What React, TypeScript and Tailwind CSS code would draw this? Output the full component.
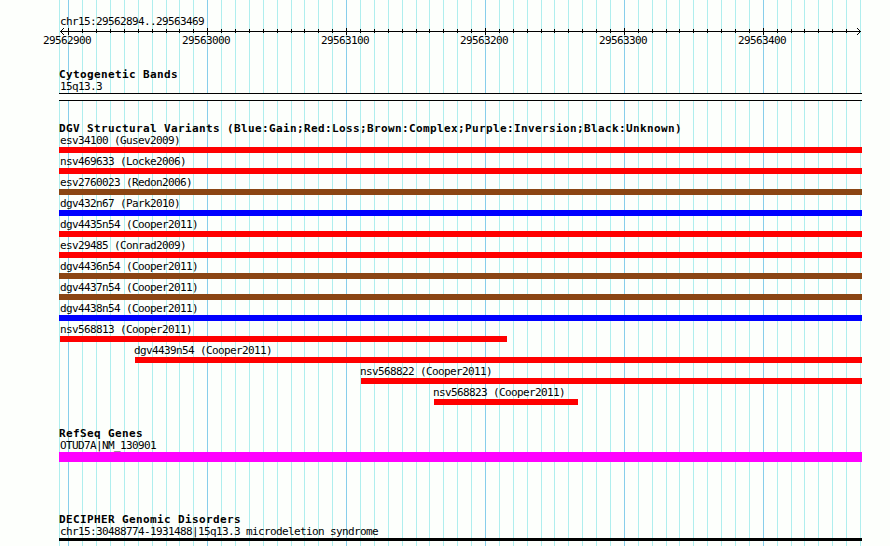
const VARIANTS = [
  { name: "esv34100 (Gusev2009)", color: "bg-[#ff0000]", start: 59, end: 862 },
  { name: "nsv469633 (Locke2006)", color: "bg-[#ff0000]", start: 59, end: 862 },
  { name: "esv2760023 (Redon2006)", color: "bg-[#8b4513]", start: 59, end: 862 },
  { name: "dgv432n67 (Park2010)", color: "bg-[#0000ff]", start: 59, end: 862 },
  { name: "dgv4435n54 (Cooper2011)", color: "bg-[#ff0000]", start: 59, end: 862 },
  { name: "esv29485 (Conrad2009)", color: "bg-[#ff0000]", start: 59, end: 862 },
  { name: "dgv4436n54 (Cooper2011)", color: "bg-[#8b4513]", start: 59, end: 862 },
  { name: "dgv4437n54 (Cooper2011)", color: "bg-[#8b4513]", start: 59, end: 862 },
  { name: "dgv4438n54 (Cooper2011)", color: "bg-[#0000ff]", start: 59, end: 862 },
  { name: "nsv568813 (Cooper2011)", color: "bg-[#ff0000]", start: 60, end: 507 },
  { name: "dgv4439n54 (Cooper2011)", color: "bg-[#ff0000]", start: 135, end: 862 },
  { name: "nsv568822 (Cooper2011)", color: "bg-[#ff0000]", start: 361, end: 862 },
  { name: "nsv568823 (Cooper2011)", color: "bg-[#ff0000]", start: 434, end: 578 },
];

const POSITIONS = ["29562900", "29563000", "29563100", "29563200", "29563300", "29563400"];

// one tick every 10 bp, starting at 29562900
const TICKS = Array.from({ length: 58 }, (_, i) => ({
  x: Math.floor(68.8 + 13.89 * i),
  major: i % 10 === 0,
}));

function Grid() {
  return (
    <svg className="absolute inset-0" width="890" height="546" shapeRendering="crispEdges">
      <rect x="59" y="0" width="1" height="546" fill="#afeeee" />
      {TICKS.map((t) => (
        <rect key={t.x} x={t.x} y="0" width="1" height="546" fill={t.major ? "#87ceeb" : "#afeeee"} />
      ))}
    </svg>
  );
}

function Axis() {
  return (
    <svg className="block" width="890" height="7" shapeRendering="crispEdges">
      <rect x="60" y="3" width="801" height="1" />
      {TICKS.slice(0, 57).map((t) => (
        <rect key={t.x} x={t.x} y={t.major ? 0 : 1} width="1" height={t.major ? 7 : 4} />
      ))}
      {[1, 2, 3].map((d) => (
        <g key={d}>
          <rect x={60 + d} y={3 - d} width="1" height="1" />
          <rect x={60 + d} y={3 + d} width="1" height="1" />
          <rect x={860 - d} y={3 - d} width="1" height="1" />
          <rect x={860 - d} y={3 + d} width="1" height="1" />
        </g>
      ))}
    </svg>
  );
}

function Heading({ text }: { text: string }) {
  return <h2 className="h-3 pl-[59px] text-[11px] leading-[11px] font-bold tracking-[0.378px]">{text}</h2>;
}

function Label({ text, left = 60 }: { text: string; left?: number }) {
  return (
    <div className="h-3" style={{ paddingLeft: left }}>
      {text}
    </div>
  );
}

export default function App() {
  return (
    <div className="relative h-[546px] w-[890px] overflow-hidden bg-[#fdfffc] font-['DejaVu_Sans_Mono',monospace] text-[11px] leading-3 tracking-[-0.622px] whitespace-pre text-black">
      <Grid />
      <main className="relative flex flex-col pt-4">
        {/* Ruler */}
        <header className="mb-[22px]">
          <Label text="chr15:29562894..29563469" />
          <Axis />
          <div className="flex h-3 pl-[43px]">
            {POSITIONS.map((p) => (
              <span key={p} className="w-[139px] shrink-0">{p}</span>
            ))}
          </div>
        </header>

        <section className="mb-[22px]">
          <Heading text="Cytogenetic Bands" />
          <Label text="15q13.3" />
          <div className="ml-[59px] h-2 w-[803px] border-y border-black bg-[#fdfffc]" />
        </section>

        <section className="mb-5">
          <Heading text="DGV Structural Variants (Blue:Gain;Red:Loss;Brown:Complex;Purple:Inversion;Black:Unknown)" />
          {VARIANTS.map((v) => (
            <div key={v.name} className="mb-[3px]">
              <Label text={v.name} left={Math.max(60, v.start - 1)} />
              <div className={`h-1.5 ${v.color}`} style={{ marginLeft: v.start, width: v.end - v.start }} />
            </div>
          ))}
        </section>

        <section className="mb-[52px]">
          <Heading text="RefSeq Genes" />
          <Label text="OTUD7A|NM_130901" />
          <div className="ml-[59px] h-2.5 w-[803px] bg-[#ff00ff]" />
        </section>

        <section>
          <Heading text="DECIPHER Genomic Disorders" />
          <Label text="chr15:30488774-1931488|15q13.3 microdeletion syndrome" />
          <div className="ml-[59px] h-[3px] w-[803px] bg-black" />
        </section>
      </main>
    </div>
  );
}
